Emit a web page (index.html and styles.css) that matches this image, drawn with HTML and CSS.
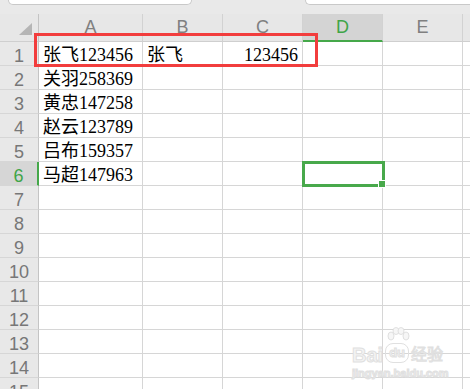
FILE: index.html
```
<!DOCTYPE html>
<html lang="zh-CN">
<head>
    <meta charset="UTF-8">
    <meta name="viewport" content="width=device-width, initial-scale=1.0">
    <title>表格</title>
    <link rel="stylesheet" href="styles.css">
</head>
<body>
    <div class="topbar">
        <div class="box box-left"></div>
        <div class="box box-right"></div>
    </div>
    <div class="sheet">
        <div class="corner"><span class="tri"></span></div>
        <div class="ch">A</div>
        <div class="ch">B</div>
        <div class="ch">C</div>
        <div class="ch active">D</div>
        <div class="ch">E</div>
        <div class="ch"></div>

        <div class="rh">1</div><div class="c">张飞123456</div><div class="c">张飞</div><div class="c num">123456</div><div class="c"></div><div class="c"></div><div class="c"></div>
        <div class="rh">2</div><div class="c">关羽258369</div><div class="c"></div><div class="c"></div><div class="c"></div><div class="c"></div><div class="c"></div>
        <div class="rh">3</div><div class="c">黄忠147258</div><div class="c"></div><div class="c"></div><div class="c"></div><div class="c"></div><div class="c"></div>
        <div class="rh">4</div><div class="c">赵云123789</div><div class="c"></div><div class="c"></div><div class="c"></div><div class="c"></div><div class="c"></div>
        <div class="rh">5</div><div class="c">吕布159357</div><div class="c"></div><div class="c"></div><div class="c"></div><div class="c"></div><div class="c"></div>
        <div class="rh active">6</div><div class="c">马超147963</div><div class="c"></div><div class="c"></div><div class="c sel"><span class="sel-box"><span class="handle"></span></span></div><div class="c"></div><div class="c"></div>
        <div class="rh">7</div><div class="c"></div><div class="c"></div><div class="c"></div><div class="c"></div><div class="c"></div><div class="c"></div>
        <div class="rh">8</div><div class="c"></div><div class="c"></div><div class="c"></div><div class="c"></div><div class="c"></div><div class="c"></div>
        <div class="rh">9</div><div class="c"></div><div class="c"></div><div class="c"></div><div class="c"></div><div class="c"></div><div class="c"></div>
        <div class="rh">10</div><div class="c"></div><div class="c"></div><div class="c"></div><div class="c"></div><div class="c"></div><div class="c"></div>
        <div class="rh">11</div><div class="c"></div><div class="c"></div><div class="c"></div><div class="c"></div><div class="c"></div><div class="c"></div>
        <div class="rh">12</div><div class="c"></div><div class="c"></div><div class="c"></div><div class="c"></div><div class="c"></div><div class="c"></div>
        <div class="rh">13</div><div class="c"></div><div class="c"></div><div class="c"></div><div class="c"></div><div class="c"></div><div class="c"></div>
        <div class="rh">14</div><div class="c"></div><div class="c"></div><div class="c"></div><div class="c"></div><div class="c"></div><div class="c"></div>
        <div class="rh">15</div><div class="c"></div><div class="c"></div><div class="c"></div><div class="c"></div><div class="c"></div><div class="c"></div>
    </div>

    <!-- 红色标注框 -->
    <div class="mark"></div>

    <!-- 水印 -->
    <div class="watermark">
        <div class="wm-top">
            <span class="wm-bai">Bai</span>
            <span class="wm-du">
                <svg class="paw" width="26" height="16" viewBox="0 0 26 16">
                    <ellipse cx="6" cy="9" rx="3" ry="4"/>
                    <ellipse cx="11" cy="4" rx="3" ry="3.5"/>
                    <ellipse cx="16" cy="4" rx="3" ry="3.5"/>
                    <ellipse cx="21" cy="9" rx="3" ry="4"/>
                </svg>
                du
            </span>
            <span class="wm-jy">经验</span>
        </div>
        <div class="wm-url">jingyan.baidu.com</div>
    </div>
</body>
</html>
```

FILE: styles.css
```
body {
    margin: 0;
    padding: 0;
    width: 470px;
    height: 389px;
    overflow: hidden;
    position: relative;
    background-color: #ffffff;
    font-family: 'Liberation Sans', 'Noto Sans CJK SC', sans-serif;
}
.topbar {
    height: 14px;
    background-color: #e9e9e9;
    display: flex;
    align-items: flex-start;
}
.box {
    height: 4px;
    background-color: #ffffff;
    border: 1px solid #c9c9c9;
    border-top: none;
}
.box-left {
    margin-left: 8px;
    width: 182px;
    border-radius: 0 0 5px 5px;
}
.box-right {
    margin-left: 113px;
    flex: 1;
    border-right: none;
    border-radius: 0 0 0 5px;
}
.sheet {
    display: grid;
    grid-template-columns: 39px 104px 80px 80px 80px 80px 1fr;
    grid-template-rows: 28px;
    grid-auto-rows: 24px;
}
.sheet > div {
    box-sizing: border-box;
}
.corner {
    background-color: #e7e7e7;
    border-right: 1px solid #c4c4c4;
    border-bottom: 1px solid #cfcfcf;
    position: relative;
}
.tri {
    position: absolute;
    right: 6px;
    bottom: 6px;
    width: 0;
    height: 0;
    border-left: 13px solid transparent;
    border-bottom: 12px solid #b5b5b5;
}
.ch {
    background-color: #e7e7e7;
    border-right: 1px solid #d2d2d2;
    border-bottom: 1px solid #cfcfcf;
    color: #808080;
    font-size: 18px;
    line-height: 18px;
    display: flex;
    align-items: center;
    justify-content: center;
    padding-bottom: 1px;
}
.ch.active {
    background-color: #d4d4d4;
    color: #3fa548;
    border-bottom: 2px solid #45a84a;
}
.rh {
    background-color: #e8e8e8;
    border-right: 1px solid #c4c4c4;
    border-bottom: 1px solid #d6d6d6;
    color: #777777;
    font-size: 18px;
    line-height: 18px;
    display: flex;
    align-items: flex-end;
    justify-content: center;
}
.rh.active {
    background-color: #d6d6d6;
    color: #3fa548;
    border-right: 2px solid #45a84a;
}
.c {
    border-right: 1px solid #d6d6d6;
    border-bottom: 1px solid #d6d6d6;
    font-family: 'Liberation Serif', 'Noto Sans CJK SC', serif;
    font-size: 18px;
    line-height: 18px;
    color: #000000;
    display: flex;
    align-items: flex-end;
    padding: 0 4px 1px 4px;
    white-space: nowrap;
}
.c.num {
    justify-content: flex-end;
}
.c.sel {
    position: relative;
}
.sel-box {
    position: absolute;
    left: -1px;
    top: -1px;
    width: 83px;
    height: 26px;
    box-sizing: border-box;
    border: 3px solid #48a94b;
}
.handle {
    position: absolute;
    right: -4px;
    bottom: -4px;
    width: 6px;
    height: 6px;
    background-color: #48a94b;
    border: 1px solid #ffffff;
}
.mark {
    position: absolute;
    left: 34px;
    top: 33px;
    width: 284px;
    height: 34px;
    box-sizing: border-box;
    border: 3px solid #f23d3d;
}
.watermark {
    position: absolute;
    left: 352px;
    top: 333px;
    color: #f4f4f4;
    -webkit-text-stroke: 1px #e0e0e0;
    font-family: 'Liberation Sans', 'Noto Sans CJK SC', sans-serif;
}
.wm-top {
    display: flex;
    align-items: flex-end;
    gap: 2px;
    height: 32px;
}
.wm-bai {
    font-size: 20px;
    font-weight: bold;
    line-height: 20px;
}
.wm-du {
    position: relative;
    font-size: 13px;
    font-weight: bold;
    line-height: 14px;
    padding: 2px 3px;
    border: 1px solid #e0e0e0;
    border-radius: 8px;
    margin-bottom: 2px;
}
.paw {
    position: absolute;
    left: -1px;
    top: -17px;
    fill: #f6f6f6;
    stroke: #e0e0e0;
    stroke-width: 1;
}
.wm-jy {
    font-size: 16px;
    line-height: 18px;
    margin-bottom: 1px;
}
.wm-url {
    font-size: 11px;
    line-height: 13px;
    font-weight: bold;
    margin-top: 2px;
}
```
